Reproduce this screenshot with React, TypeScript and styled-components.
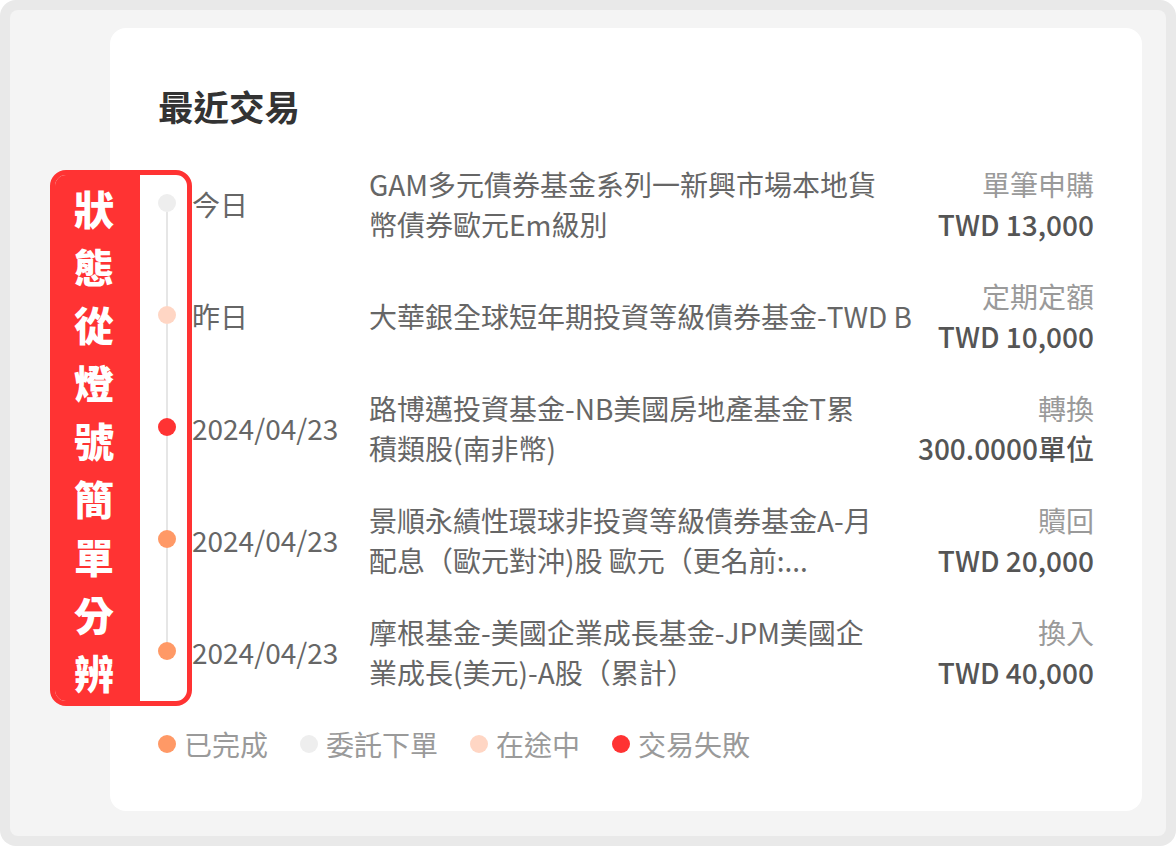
import React from "react";
import styled, { createGlobalStyle } from "styled-components";

const GlobalStyle = createGlobalStyle`
  html, body { margin: 0; padding: 0; background: #ffffff; }
  body { font-family: "Noto Sans CJK TC", "Noto Sans", sans-serif; }
  * { box-sizing: border-box; }
`;

const Frame = styled.div`
  position: relative;
  width: 1176px;
  height: 846px;
  background: #e9e9e9;
  border-radius: 16px;
  padding: 10px;
`;

const Inner = styled.div`
  height: 100%;
  background: #f4f4f4;
  border-radius: 8px;
  padding: 18px 24px 25px 100px;
  display: flex;
  flex-direction: column;
`;

const Card = styled.section`
  flex: 1;
  background: #ffffff;
  border-radius: 16px;
  padding: 54px 48px 0 48px;
  display: flex;
  flex-direction: column;
`;

const Title = styled.h2`
  margin: 0 0 18px 0;
  font-size: 35.5px;
  line-height: 48px;
  font-weight: 700;
  color: #333333;
`;

const List = styled.div`
  display: flex;
  flex-direction: column;
`;

const Row = styled.div`
  display: grid;
  grid-template-columns: 18px 193px 1fr auto;
  height: 112px;
  align-items: stretch;
`;

const Track = styled.div`
  display: flex;
  flex-direction: column;
  align-items: center;
`;

const Segment = styled.div<{ $hidden?: boolean }>`
  flex: 1;
  width: 2px;
  background: ${(p) => (p.$hidden ? "transparent" : "#e6e6e6")};
`;

const Dot = styled.span<{ $color: string }>`
  flex: none;
  width: 18px;
  height: 18px;
  border-radius: 50%;
  background: ${(p) => p.$color};
`;

const TrackDot = styled(Dot)`
  margin-top: -3px;
`;

const DateCell = styled.div`
  align-self: center;
  padding-left: 16px;
  font-size: 28px;
  line-height: 40px;
  color: #666666;
  white-space: nowrap;
`;

const Name = styled.div`
  align-self: center;
  font-size: 28px;
  line-height: 40px;
  color: #666666;
  white-space: nowrap;
`;

const Line = styled.div``;

const Side = styled.div`
  align-self: center;
  text-align: right;
  font-size: 28px;
  line-height: 40px;
  white-space: nowrap;
`;

const Kind = styled.div`
  color: #9a9a9a;
`;

const Amount = styled.div`
  color: #555555;
  font-weight: 500;
`;

const Legend = styled.div`
  display: flex;
  gap: 32px;
  margin-top: 16px;
`;

const LegendItem = styled.div`
  display: flex;
  align-items: center;
  gap: 8px;
  font-size: 28px;
  line-height: 40px;
  color: #9a9a9a;
`;

const Callout = styled.div`
  position: absolute;
  left: 50px;
  top: 170px;
  width: 142px;
  height: 536px;
  border: 5px solid #ff3333;
  border-radius: 16px;
  overflow: hidden;
  display: flex;
`;

const CalloutBand = styled.div`
  width: 85px;
  background: #ff3333;
  display: flex;
  justify-content: center;
  padding: 4px 7px 0 0;
`;

const CalloutText = styled.div`
  width: 40px;
  font-size: 40px;
  line-height: 58px;
  font-weight: 900;
  color: #ffffff;
  word-break: break-all;
  text-align: center;
`;

const COLORS = {
  done: "#ff9966",
  pending: "#eeeeee",
  transit: "#ffd6c4",
  failed: "#ff3333",
};

type Tx = {
  date: string;
  status: keyof typeof COLORS;
  name: string[];
  kind: string;
  amount: string;
};

const txs: Tx[] = [
  {
    date: "今日",
    status: "pending",
    name: ["GAM多元債券基金系列一新興市場本地貨", "幣債券歐元Em級別"],
    kind: "單筆申購",
    amount: "TWD 13,000",
  },
  {
    date: "昨日",
    status: "transit",
    name: ["大華銀全球短年期投資等級債券基金-TWD B"],
    kind: "定期定額",
    amount: "TWD 10,000",
  },
  {
    date: "2024/04/23",
    status: "failed",
    name: ["路博邁投資基金-NB美國房地產基金T累", "積類股(南非幣)"],
    kind: "轉換",
    amount: "300.0000單位",
  },
  {
    date: "2024/04/23",
    status: "done",
    name: ["景順永績性環球非投資等級債券基金A-月", "配息（歐元對沖)股 歐元（更名前:..."],
    kind: "贖回",
    amount: "TWD 20,000",
  },
  {
    date: "2024/04/23",
    status: "done",
    name: ["摩根基金-美國企業成長基金-JPM美國企", "業成長(美元)-A股（累計）"],
    kind: "換入",
    amount: "TWD 40,000",
  },
];

const legend: { status: keyof typeof COLORS; label: string }[] = [
  { status: "done", label: "已完成" },
  { status: "pending", label: "委託下單" },
  { status: "transit", label: "在途中" },
  { status: "failed", label: "交易失敗" },
];

export default function App() {
  return (
    <>
      <GlobalStyle />
      <Frame>
        <Inner>
          <Card>
            <Title>最近交易</Title>
            <List>
              {txs.map((t, i) => (
                <Row key={i}>
                  <Track>
                    <Segment $hidden={i === 0} />
                    <TrackDot $color={COLORS[t.status]} />
                    <Segment $hidden={i === txs.length - 1} />
                  </Track>
                  <DateCell>{t.date}</DateCell>
                  <Name>
                    {t.name.map((l, j) => (
                      <Line key={j}>{l}</Line>
                    ))}
                  </Name>
                  <Side>
                    <Kind>{t.kind}</Kind>
                    <Amount>{t.amount}</Amount>
                  </Side>
                </Row>
              ))}
            </List>
            <Legend>
              {legend.map((l) => (
                <LegendItem key={l.status}>
                  <Dot $color={COLORS[l.status]} />
                  {l.label}
                </LegendItem>
              ))}
            </Legend>
          </Card>
        </Inner>
        <Callout>
          <CalloutBand>
            <CalloutText>狀態從燈號簡單分辨</CalloutText>
          </CalloutBand>
        </Callout>
      </Frame>
    </>
  );
}
